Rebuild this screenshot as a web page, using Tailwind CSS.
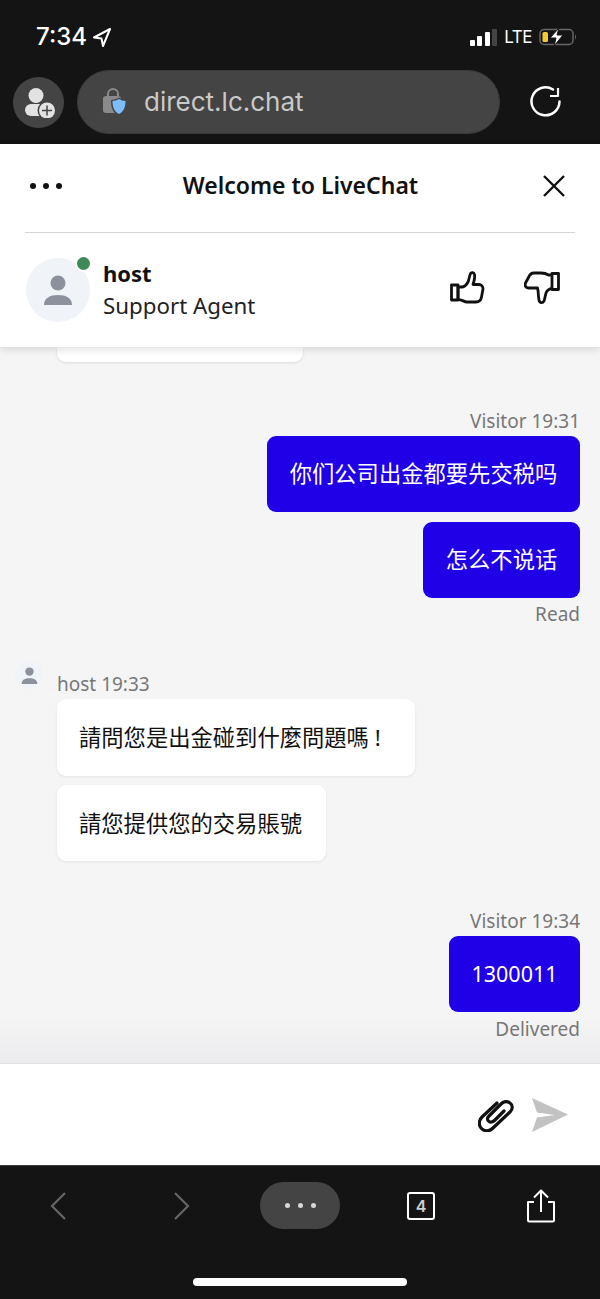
<!DOCTYPE html>
<html lang="zh">
  <head>
    <meta charset="UTF-8" />
    <meta name="viewport" content="width=device-width, initial-scale=1.0" />
    <title>Welcome to LiveChat</title>
    <script src="https://cdn.jsdelivr.net/npm/@tailwindcss/browser@4"></script>
  </head>
  <body class="bg-[#141414] font-['Noto_Sans','Noto_Sans_CJK_SC',sans-serif]">
    <div class="w-[600px] h-[1299px] flex flex-col overflow-hidden">
      <!-- browser top -->
      <div class="h-[144px] shrink-0 bg-[#141414] flex flex-col">
        <div class="h-[70px] pl-[36px] pr-[23px] pt-[20px] flex justify-between items-start">
          <div class="flex items-center gap-[6px] h-[34px] text-white">
            <span class="text-[24px] font-medium font-['Inter',sans-serif] leading-none">7:34</span>
            <svg width="18" height="19" viewBox="0 0 18 19" fill="none" stroke="white" stroke-width="2" stroke-linejoin="round"><path d="M17 1 1 9.500 8.500 10.500 10 18Z" /></svg>
          </div>
          <div class="flex items-center h-[34px] gap-[7px]">
            <div class="flex items-end gap-[2.500px] h-[17px]">
              <div class="w-[5px] h-[6px] bg-white rounded-[1px]"></div>
              <div class="w-[5px] h-[10px] bg-white rounded-[1px]"></div>
              <div class="w-[5px] h-[14px] bg-white rounded-[1px]"></div>
              <div class="w-[5px] h-[17px] bg-[#444] rounded-[1px]"></div>
            </div>
            <span class="text-white text-[17px] tracking-[-0.5px] font-['Inter',sans-serif] leading-none">LTE</span>
            <svg width="38" height="18" viewBox="0 0 38 18" fill="none">
              <rect x="1" y="1.500" width="33" height="15" rx="4" stroke="#666" stroke-width="1.500" />
              <path d="M36 6.500c1.200.5 1.200 4.500 0 5z" fill="#666" />
              <rect x="3.500" y="4" width="5.500" height="10" rx="1.500" fill="#f5c92e" />
              <path d="M20 0 11 10h6L15 18 24 7h-6z" fill="white" stroke="#141414" stroke-width="1" />
            </svg>
          </div>
        </div>
        <div class="flex items-center pl-[13px] gap-[13px]">
          <div class="w-[51px] h-[51px] rounded-full bg-[#444] flex items-center justify-center shrink-0">
            <svg width="32" height="32" viewBox="0 0 32 32">
              <circle cx="13" cy="9.500" r="7.500" fill="#e2e2e2" />
              <rect x="2" y="18" width="20" height="12" rx="6" fill="#e2e2e2" />
              <circle cx="24" cy="24.500" r="9.500" fill="#444" />
              <circle cx="24" cy="24.500" r="8" fill="#e2e2e2" />
              <path d="M24 19.500v10M19 24.500h10" stroke="#444" stroke-width="1.500" />
            </svg>
          </div>
          <div class="w-[423px] h-[64px] shrink-0 rounded-full bg-[#444] border border-[#3b3b3b] flex items-center pl-[23px] gap-[17px]">
            <svg width="26" height="30" viewBox="0 0 26 30" class="mt-[2px]">
              <path d="M7 8V6a5 5 0 0 1 10 0v2" fill="none" stroke="#8a8a8a" stroke-width="2" />
              <rect x="2" y="8" width="18" height="17" rx="3" fill="#8a8a8a" />
              <path d="M18 9.500c2 1.500 4 2 7 2.200 1 0 1 .3 1 1.300 0 7-2 12-8 15-6-3-8-8-8-15 0-1 .5-1.300 1.500-1.300 2.500-.2 4.500-.7 6.500-2.200z" fill="#444" />
              <path d="M18 11c2 1.300 4 1.800 6.500 2 0 6-1.500 10.500-6.500 13-5-2.500-6.500-7-6.500-13 2.500-.2 4.500-.7 6.500-2z" fill="#7cbcf8" />
            </svg>
            <span class="text-[26px] text-[#c9c9c9] font-['Inter',sans-serif] leading-none">direct.lc.chat</span>
          </div>
          <svg width="32" height="32" viewBox="0 0 32 32" fill="none" stroke="white" stroke-width="2.500" class="ml-[17px] shrink-0" stroke-linejoin="round">
            <path d="M23 3.500A14 14 0 1 0 29.500 15.500" stroke-linecap="round" />
            <path d="M28 2V10H20" stroke-width="2.200" />
          </svg>
        </div>
      </div>

      <!-- widget header -->
      <div class="h-[203px] shrink-0 bg-white relative z-10 shadow-[0_2px_8px_rgba(0,0,0,0.14)] flex flex-col px-[25px]">
        <div class="h-[89px] flex items-center justify-between relative border-b border-[#d5d5d7] pb-[5px]">
          <div class="flex gap-[7px] ml-[5px]">
            <div class="w-[6px] h-[6px] rounded-full bg-[#111]"></div>
            <div class="w-[6px] h-[6px] rounded-full bg-[#111]"></div>
            <div class="w-[6px] h-[6px] rounded-full bg-[#111]"></div>
          </div>
          <span class="text-[23px] font-semibold text-[#111] leading-none -ml-[3px]">Welcome to LiveChat</span>
          <svg width="24" height="24" viewBox="0 0 24 24" stroke="#111" stroke-width="2.400" class="mr-[9px]"><path d="M2 2 22 22M22 2 2 22" /></svg>
        </div>
        <div class="flex items-center h-[113px]">
          <div class="relative w-[64px] h-[64px] ml-[1px] rounded-full bg-[#f0f3f7] flex items-center justify-center">
            <svg width="34" height="34" viewBox="0 0 34 34" fill="#8c919d">
              <circle cx="17" cy="10" r="7.500" />
              <path d="M3 32c0-7 6-10 14-10s14 3 14 10z" />
            </svg>
            <div class="absolute top-[-2.500px] right-[-1.500px] w-[13px] h-[13px] rounded-full bg-[#3d8a58] border-2 border-white box-content"></div>
          </div>
          <div class="ml-[13px] flex flex-col">
            <span class="text-[22px] font-bold text-[#111] leading-[32px]">host</span>
            <span class="text-[22.300px] text-[#222] leading-[33px]">Support Agent</span>
          </div>
          <div class="ml-auto flex items-center gap-[38px] mr-[15px] -mt-[3px]">
            <svg width="36" height="36" viewBox="0 0 36 36" fill="none" stroke="#111" stroke-width="2.800" stroke-linejoin="round">
              <rect x="1.500" y="15" width="6.500" height="15" />
              <path d="M8 17h3.500c3 0 5-2 6.500-5 1-2.500 1.500-6 2.500-8.500 1-1.500 3.500-1 4 1 .7 3-.5 7-1.500 10h6c2.500 0 4 2 4 4.500l-1.500 8c-.5 3-2.500 5-5.500 5h-9c-3 0-5-2.500-9-2.500z" />
            </svg>
            <svg width="36" height="36" viewBox="0 0 36 36" fill="none" stroke="#111" stroke-width="2.800" stroke-linejoin="round">
              <rect x="28" y="3.500" width="6.500" height="16" />
              <path d="M28 5h-3.500c-3-2-5-2-7.500-2h-7c-3 0-4.500 2-5.500 4.500L1.500 13c-1 2.500 0 5 3 5h9c1 3 .5 7 1.500 12 .5 3 3.500 3.500 5 1 1.500-4 1-7 3-10 1.500-1.500 3-2.500 5-2.500" />
            </svg>
          </div>
        </div>
      </div>

      <!-- chat -->
      <div class="h-[716px] shrink-0 relative bg-[#f5f5f6] overflow-hidden flex flex-col px-[20px]">
        <div class="ml-[37px] w-[246px] h-[15px] bg-white rounded-b-[9px] shadow-[0_1px_3px_rgba(0,0,0,0.1)]"></div>

        <div class="mt-[45px] h-[29px] text-right text-[19px] leading-[28px] text-[#777]">Visitor 19:31</div>
        <div class="flex flex-col items-end gap-[10px]">
          <div class="h-[76px] w-[313px] rounded-[9px] bg-[#2000e6] text-white text-[22.300px] flex items-center justify-center">你们公司出金都要先交税吗</div>
          <div class="h-[76px] w-[157px] rounded-[9px] bg-[#2000e6] text-white text-[22.300px] flex items-center justify-center">怎么不说话</div>
        </div>
        <div class="mt-[2px] h-[28px] text-right text-[19px] leading-[28px] text-[#777]">Read</div>

        <div class="mt-[42px] h-[29px] relative pl-[37px] text-[19px] leading-[29px] text-[#777]">
          <div class="absolute left-[-5px] top-[-9px] w-[28px] h-[28px] rounded-full bg-[#f0f3f7] flex items-center justify-center">
            <svg width="19" height="19" viewBox="0 0 34 34" fill="#8c919d">
              <circle cx="17" cy="10" r="7.500" />
              <path d="M3 32c0-7 6-10 14-10s14 3 14 10z" />
            </svg>
          </div>
          host 19:33
        </div>
        <div class="flex flex-col items-start gap-[9px] ml-[37px]">
          <div class="h-[77px] w-[358px] rounded-[9px] bg-white text-[#111] text-[22.300px] flex items-center pl-[23px] -indent-[1px] shadow-[0_1px_3px_rgba(0,0,0,0.08)]">請問您是出金碰到什麼問題嗎 !</div>
          <div class="h-[76px] w-[269px] rounded-[9px] bg-white text-[#111] text-[22.300px] flex items-center pl-[23px] pt-[2px] -indent-[1px] shadow-[0_1px_3px_rgba(0,0,0,0.08)]">請您提供您的交易賬號</div>
        </div>

        <div class="absolute left-0 right-0 bottom-0 h-[48px] bg-gradient-to-b from-[#f5f5f6]/0 to-[#ebebed]"></div>

        <div class="relative mt-[46px] h-[29px] text-right text-[19px] leading-[28px] text-[#777]">Visitor 19:34</div>
        <div class="relative flex flex-col items-end">
          <div class="h-[76px] w-[131px] rounded-[9px] bg-[#2000e6] text-white text-[21.500px] flex items-center justify-center">1300011</div>
        </div>
        <div class="relative mt-[3px] h-[28px] text-right text-[19px] leading-[28px] text-[#777]">Delivered</div>
      </div>

      <!-- composer -->
      <div class="h-[102px] shrink-0 bg-white border-t border-[#e3e3e5] flex items-center justify-end gap-[17px] pr-[31px]">
        <svg width="36" height="32" viewBox="0 0 36 32" fill="none" stroke="#111" stroke-width="3.200" stroke-linecap="round" stroke-linejoin="round" class="mt-[2px]">
          <path d="M19 3 4 17C0 21 1 27 4 29C8 32 12 31 15 28L32 12C35 9 35 5 32 3C29 1 26 1 23 4L11 16C9 18 9 20 11 21.500C13 23 15 22 17 20L26 11" />
        </svg>
        <svg width="38" height="35" viewBox="0 0 38 35" fill="#c2c2c2" class="mt-[2px]"><path d="M1 0 37 16.500 1 34 6 19.500 24 17 6 14.500z" /></svg>
      </div>

      <!-- browser bottom -->
      <div class="flex-1 bg-[#141414] border-t border-[#3a3a3a] flex flex-col relative">
        <div class="h-[79px] flex items-center relative pl-[50px]">
          <svg width="18" height="32" viewBox="0 0 18 32" fill="none" stroke="#666" stroke-width="2.200" class="shrink-0"><path d="M15 3 2 16 15 29" /></svg>
          <svg width="18" height="32" viewBox="0 0 18 32" fill="none" stroke="#666" stroke-width="2.200" class="ml-[104px] shrink-0"><path d="M3 3 16 16 3 29" /></svg>
          <div class="ml-[70px] w-[80px] h-[47px] shrink-0 rounded-full bg-[#444] flex items-center justify-center gap-[8px]">
            <div class="w-[5px] h-[5px] rounded-full bg-[#d8d8d8]"></div>
            <div class="w-[5px] h-[5px] rounded-full bg-[#d8d8d8]"></div>
            <div class="w-[5px] h-[5px] rounded-full bg-[#d8d8d8]"></div>
          </div>
          <div class="ml-[67px] w-[28px] h-[28px] shrink-0 rounded-[3px] border-2 border-white flex items-center justify-center text-[16px] font-semibold text-[#ccc] font-['Inter',sans-serif]">4</div>
          <svg width="30" height="34" viewBox="0 0 30 34" fill="none" stroke="white" stroke-width="2" class="ml-[91px] shrink-0" stroke-linejoin="round"><path d="M8 13H2v18c0 1 .5 1.500 1.500 1.500h23c1 0 1.500-.5 1.500-1.500V13h-6M15 23V2M8 8.500 15 1.500 22 8.500" /></svg>
        </div>
        <div class="absolute left-[193px] bottom-[13px] w-[214px] h-[8px] rounded-full bg-white"></div>
      </div>
    </div>
  </body>
</html>
